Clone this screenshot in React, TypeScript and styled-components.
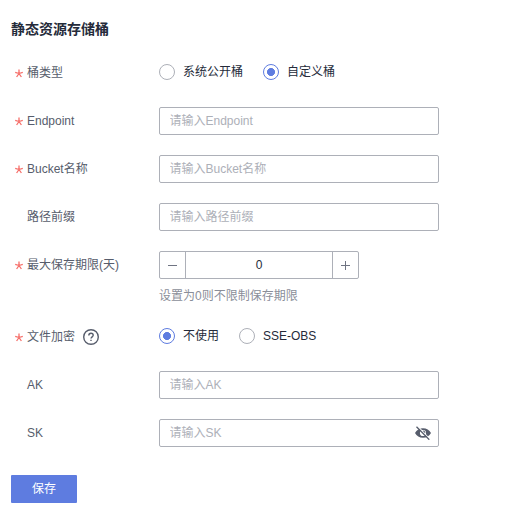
import { useState } from "react";
import styled, { createGlobalStyle } from "styled-components";

const BUCKET_TYPES = ["系统公开桶", "自定义桶"];
const ENCRYPTIONS = ["不使用", "SSE-OBS"];

interface RadioGroupProps {
  name: string;
  options: string[];
  value: string;
  onChange: (value: string) => void;
}

const RadioGroup = ({ name, options, value, onChange }: RadioGroupProps) => (
  <RadioWrapper>
    {options.map((option) => (
      <RadioLabel key={option}>
        <Radio
          type="radio"
          name={name}
          checked={value === option}
          onChange={() => onChange(option)}
        />
        {option}
      </RadioLabel>
    ))}
  </RadioWrapper>
);

interface FieldProps {
  label: string;
  required?: boolean;
  tall?: boolean;
  extra?: React.ReactNode;
  children: React.ReactNode;
}

const Field = ({ label, required, tall, extra, children }: FieldProps) => (
  <Row>
    <Label $tall={tall}>
      <Mark>
        {required && (
          <svg width="8" height="9" viewBox="0 0 8 9">
            <path
              d="M4 .4v4.1M4 4.5L.2 3.3M4 4.5l3.800-1.200M4 4.500L1.600 8M4 4.500L6.400 8"
              stroke="#f66f6a"
              strokeWidth="1.3"
              fill="none"
            />
          </svg>
        )}
      </Mark>
      {label}
      {extra}
    </Label>
    <Control>{children}</Control>
  </Row>
);

const HelpIcon = () => (
  <Help width="16" height="16" viewBox="0 0 16 16" fill="none">
    <circle cx="8" cy="8" r="7.3" stroke="#575d6c" strokeWidth="1.4" />
    <path
      d="M5.8 6.4C5.8 5.1 6.7 4.2 8 4.2s2.2.8 2.2 2c0 1.6-2.2 1.7-2.2 3.4"
      stroke="#575d6c"
      strokeWidth="1.4"
    />
    <path d="M7.3 10.7h1.4v1.4H7.3z" fill="#575d6c" />
  </Help>
);

const EyeOffIcon = () => (
  <svg width="16" height="14" viewBox="0 0 16 14" fill="none">
    <path
      fillRule="evenodd"
      d="M0 7c1.6-3 4.5-4.7 8-4.7S14.4 4 16 7c-1.6 3-4.5 4.7-8 4.7S1.6 10 0 7zM8 3.9a3.1 3.1 0 1 0 0 6.2 3.1 3.1 0 0 0 0-6.2z"
      fill="#575d6c"
    />
    <path d="M8 5.2a1.800 1.800 0 0 1 1.800 1.800" stroke="#575d6c" strokeWidth="1.2" />
    <path d="M2.6.2l12 12.6" stroke="#fff" strokeWidth="1.2" />
    <path d="M1.5.7l12.8 13" stroke="#575d6c" strokeWidth="1.3" />
  </svg>
);

const App = () => {
  const [bucketType, setBucketType] = useState("自定义桶");
  const [encryption, setEncryption] = useState("不使用");
  const [days, setDays] = useState(0);
  const [showSecret, setShowSecret] = useState(false);

  const handleChangeDays = (event: React.ChangeEvent<HTMLInputElement>) => {
    const value = Number(event.target.value);

    if (isNaN(value)) {
      return;
    }

    setDays(value);
  };

  return (
    <>
      <GlobalStyle />
      <Wrapper>
        <Title>静态资源存储桶</Title>
        <Form>
          <Field label="桶类型" required tall>
            <RadioGroup
              name="bucketType"
              options={BUCKET_TYPES}
              value={bucketType}
              onChange={setBucketType}
            />
          </Field>
          <Field label="Endpoint" required>
            <Input placeholder="请输入Endpoint" />
          </Field>
          <Field label="Bucket名称" required>
            <Input placeholder="请输入Bucket名称" />
          </Field>
          <Field label="路径前缀">
            <Input placeholder="请输入路径前缀" />
          </Field>
          <Field label="最大保存期限(天)" required>
            <Stepper>
              <StepButton onClick={() => setDays(Math.max(0, days - 1))}>
                <svg width="9" height="9" viewBox="0 0 9 9">
                  <path d="M0 4.5h9" stroke="#6f7482" />
                </svg>
              </StepButton>
              <StepInput value={days} onChange={handleChangeDays} />
              <StepButton onClick={() => setDays(days + 1)}>
                <svg width="9" height="9" viewBox="0 0 9 9">
                  <path d="M0 4.5h9M4.5 0v9" stroke="#6f7482" />
                </svg>
              </StepButton>
            </Stepper>
            <Hint>设置为0则不限制保存期限</Hint>
          </Field>
          <Field label="文件加密" required tall extra={<HelpIcon />}>
            <RadioGroup
              name="encryption"
              options={ENCRYPTIONS}
              value={encryption}
              onChange={setEncryption}
            />
          </Field>
          <Field label="AK">
            <Input placeholder="请输入AK" />
          </Field>
          <Field label="SK">
            <SecretBox>
              <SecretInput
                type={showSecret ? "text" : "password"}
                placeholder="请输入SK"
              />
              <EyeButton onClick={() => setShowSecret(!showSecret)}>
                <EyeOffIcon />
              </EyeButton>
            </SecretBox>
          </Field>
        </Form>
        <SaveButton>保存</SaveButton>
      </Wrapper>
    </>
  );
};

export default App;

const GlobalStyle = createGlobalStyle`
  * {
    box-sizing: border-box;
  }

  body {
    margin: 0;
    background-color: #fff;
  }

  body,
  input,
  button {
    font-family: "Liberation Sans", "Noto Sans CJK SC", sans-serif;
    font-size: 12px;
  }
`;

const Wrapper = styled.div`
  padding: 19px 11px 0;
`;

const Title = styled.h1`
  height: 20px;
  margin: 0 0 19px;
  color: #252b3a;
  font-size: 14px;
  font-weight: 700;
  line-height: 20px;
`;

const Form = styled.div`
  display: flex;
  flex-direction: column;
  gap: 20px;
`;

const Row = styled.div`
  display: flex;
  align-items: flex-start;
`;

const Label = styled.div<{ $tall?: boolean }>`
  width: 148px;
  height: ${({ $tall }) => ($tall ? "29px" : "28px")};
  display: flex;
  align-items: center;
  padding-top: ${({ $tall }) => ($tall ? "1px" : "0")};
  color: #575d6c;
  line-height: 28px;
  white-space: nowrap;
`;

const Mark = styled.span`
  width: 16px;
  height: 9px;
  display: flex;
  padding-left: 4px;
`;

const Help = styled.svg`
  margin: 0 0 0 8px;
`;

const Control = styled.div`
  display: flex;
  flex-direction: column;
`;

const RadioWrapper = styled.div`
  height: 28px;
  display: flex;
  gap: 20px;
`;

const RadioLabel = styled.label`
  display: flex;
  align-items: center;
  gap: 8px;
  color: #252b3a;
  line-height: 28px;
  cursor: pointer;
`;

const Radio = styled.input`
  appearance: none;
  width: 16px;
  height: 16px;
  margin: 0;
  border: 1px solid #adb0b8;
  border-radius: 50%;

  &:checked {
    border-color: #5e7ce0;
    background: radial-gradient(circle, #5e7ce0 3.7px, transparent 4.3px);
  }
`;

const Input = styled.input`
  width: 280px;
  height: 28px;
  padding: 0 10px 0 9.500px;
  border: 1px solid #adb0b8;
  border-radius: 2px;
  color: #252b3a;
  outline: none;

  &:focus {
    border-color: #5e7ce0;
  }

  &::placeholder {
    color: #adb0b8;
  }
`;

const Stepper = styled.div`
  width: 200px;
  height: 28px;
  display: flex;
  border: 1px solid #adb0b8;
  border-radius: 2px;
`;

const StepButton = styled.button`
  width: 25px;
  display: flex;
  align-items: center;
  justify-content: center;
  padding: 0;
  border: none;
  background: none;
  cursor: pointer;
`;

const StepInput = styled.input`
  flex: 1;
  min-width: 0;
  padding: 0;
  border: solid #adb0b8;
  border-width: 0 1px;
  color: #252b3a;
  text-align: center;
  outline: none;
`;

const Hint = styled.div`
  height: 18px;
  margin: 8px 0 -3px;
  color: #8a8e99;
  line-height: 18px;
`;

const SecretBox = styled.div`
  width: 280px;
  height: 28px;
  display: flex;
  align-items: center;
  padding: 0 7px 0 9.500px;
  border: 1px solid #adb0b8;
  border-radius: 2px;
`;

const SecretInput = styled.input`
  flex: 1;
  min-width: 0;
  padding: 0;
  border: none;
  outline: none;

  &::placeholder {
    color: #adb0b8;
  }
`;

const EyeButton = styled.button`
  display: flex;
  padding: 0;
  border: none;
  background: none;
  cursor: pointer;
`;

const SaveButton = styled.button`
  width: 66px;
  height: 28px;
  margin-top: 28px;
  padding: 0 0 3px;
  border: none;
  border-radius: 1px;
  color: #fff;
  background-color: #5e7ce0;
  cursor: pointer;
`;
